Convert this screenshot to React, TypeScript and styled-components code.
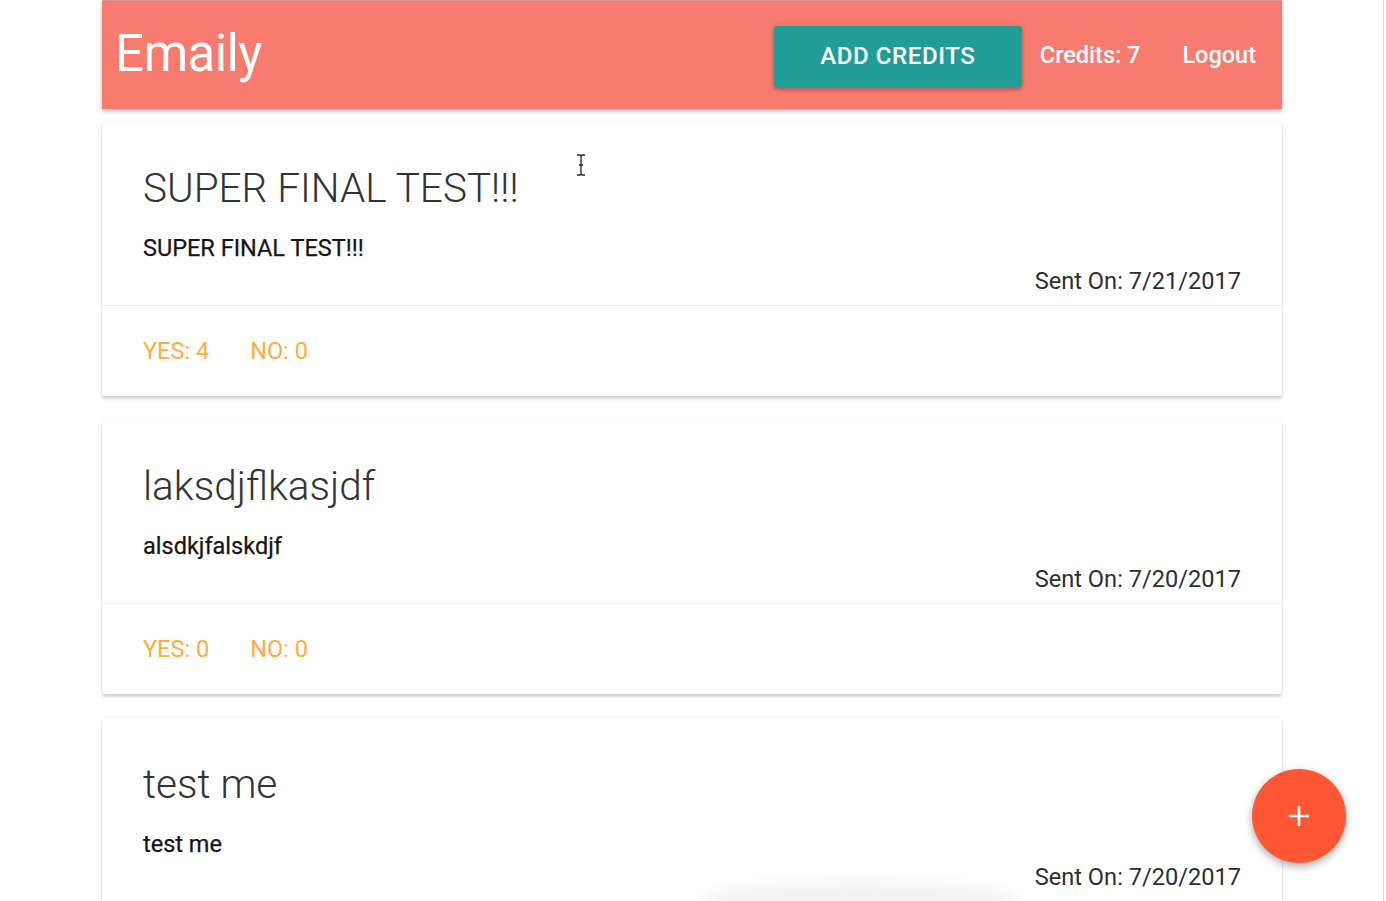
import React from "react";
import styled, { createGlobalStyle } from "styled-components";

type Survey = {
  title: string;
  body: string;
  sent: string;
  yes: number;
  no: number;
};

const surveys: Survey[] = [
  { title: "SUPER FINAL TEST!!!", body: "SUPER FINAL TEST!!!", sent: "7/21/2017", yes: 4, no: 0 },
  { title: "laksdjflkasjdf", body: "alsdkjfalskdjf", sent: "7/20/2017", yes: 0, no: 0 },
  { title: "test me", body: "test me", sent: "7/20/2017", yes: 0, no: 0 },
];

const GlobalStyle = createGlobalStyle`
  html, body {
    margin: 0;
    padding: 0;
    background: #ffffff;
    overflow: hidden;
  }
  body {
    font-family: Roboto, "Liberation Sans", sans-serif;
    color: rgba(0, 0, 0, 0.87);
  }
`;

export default function App() {
  return (
    <>
      <GlobalStyle />
      <Page>
        <Container>
          <Nav>
            <Brand>Emaily</Brand>
            <NavRight>
              <AddButton>ADD CREDITS</AddButton>
              <NavItem>Credits: 7</NavItem>
              <NavItem>Logout</NavItem>
            </NavRight>
          </Nav>
          <List>
            {surveys.map((s, i) => (
              <Card key={i}>
                <CardContent>
                  <CardTitle>{s.title}</CardTitle>
                  <CardText>{s.body}</CardText>
                  <SentOn>Sent On: {s.sent}</SentOn>
                </CardContent>
                <CardAction>
                  <ActionLink>YES: {s.yes}</ActionLink>
                  <ActionLink>NO: {s.no}</ActionLink>
                </CardAction>
              </Card>
            ))}
          </List>
        </Container>
        <Cursor width="12" height="22" viewBox="0 0 12 22">
          <path d="M2 1h3l1 1 1-1h3M6 2v18M2 21h3l1-1 1 1h3M4 11h4" stroke="#222" strokeWidth="1.3" fill="none" />
        </Cursor>
        <Fab>
          <svg width="24" height="24" viewBox="0 0 24 24">
            <path d="M12 2v20M2 12h20" stroke="#fff" strokeWidth="2.6" />
          </svg>
        </Fab>
        <BottomGlow />
      </Page>
    </>
  );
}

const Page = styled.div`
  position: relative;
  width: 1383px;
  height: 901px;
  border-right: 1px solid #d8d8d8;
  overflow: hidden;
`;

const Container = styled.div`
  width: 1180px;
  margin: 0 auto;
  padding-left: 1px;
`;

const Nav = styled.nav`
  display: flex;
  align-items: center;
  justify-content: space-between;
  height: 109px;
  padding: 0 26px 0 13px;
  background: #f87b70;
  border-top: 1px solid #d9a09b;
  box-sizing: border-box;
  box-shadow: 0 3px 5px rgba(0, 0, 0, 0.18), 0 1px 3px rgba(0, 0, 0, 0.12);
`;

const Brand = styled.div`
  color: #ffffff;
  font-size: 51px;
  font-weight: 400;
  letter-spacing: -0.6px;
  margin-top: -3px;
`;

const NavRight = styled.div`
  display: flex;
  align-items: center;
`;

const AddButton = styled.button`
  width: 248px;
  height: 61px;
  margin-top: 2px;
  border: none;
  border-radius: 3px;
  background: #219c96;
  color: #ffffff;
  font-family: Roboto, "Liberation Sans", sans-serif;
  font-size: 24px;
  font-weight: 500;
  letter-spacing: 0.6px;
  box-shadow: 0 3px 4px rgba(0, 0, 0, 0.2), 0 1px 6px rgba(0, 0, 0, 0.14);
  margin-right: 18px;
`;

const NavItem = styled.span`
  color: #ffffff;
  font-size: 23.5px;
  font-weight: 500;
  margin-right: 42px;

  &:last-child {
    margin-right: 0;
  }
`;

const List = styled.div`
  display: flex;
  flex-direction: column;
  gap: 24px;
  padding-top: 13px;
`;

const Card = styled.div`
  background: #ffffff;
  border-radius: 3px;
  box-shadow: 0 3px 3px rgba(0, 0, 0, 0.16), 0 0 3px rgba(0, 0, 0, 0.07);
`;

const CardContent = styled.div`
  padding: 42px 41px 7px;
  border-bottom: 1px solid rgba(160, 160, 160, 0.2);
`;

const CardTitle = styled.div`
  font-size: 40.5px;
  font-weight: 300;
  line-height: 48px;
  color: #333;
  margin-bottom: 19px;
`;

const CardText = styled.p`
  margin: 0;
  font-size: 23.5px;
  font-weight: 400;
  line-height: 34px;
  color: #151515;
  -webkit-text-stroke: 0.25px #151515;
`;

const SentOn = styled.p`
  margin: -1px 0 0;
  text-align: right;
  font-size: 23.6px;
  font-weight: 400;
  line-height: 34px;
  color: #2e2e2e;
`;

const CardAction = styled.div`
  display: flex;
  gap: 41px;
  padding: 31px 41px 31px;
`;

const ActionLink = styled.span`
  color: #ffab40;
  font-size: 23.5px;
  font-weight: 400;
  line-height: 28px;
`;

const Cursor = styled.svg`
  position: absolute;
  left: 575px;
  top: 154px;
`;

const Fab = styled.div`
  position: absolute;
  left: 1252px;
  top: 769px;
  width: 94px;
  height: 94px;
  border-radius: 50%;
  background: #ff5733;
  display: flex;
  align-items: center;
  justify-content: center;
  box-shadow: 0 4px 8px rgba(0, 0, 0, 0.22), 0 2px 10px rgba(0, 0, 0, 0.12);
`;

const BottomGlow = styled.div`
  position: absolute;
  left: 700px;
  top: 882px;
  width: 320px;
  height: 40px;
  border-radius: 50%;
  background: rgba(0, 0, 0, 0.05);
  filter: blur(8px);
`;
